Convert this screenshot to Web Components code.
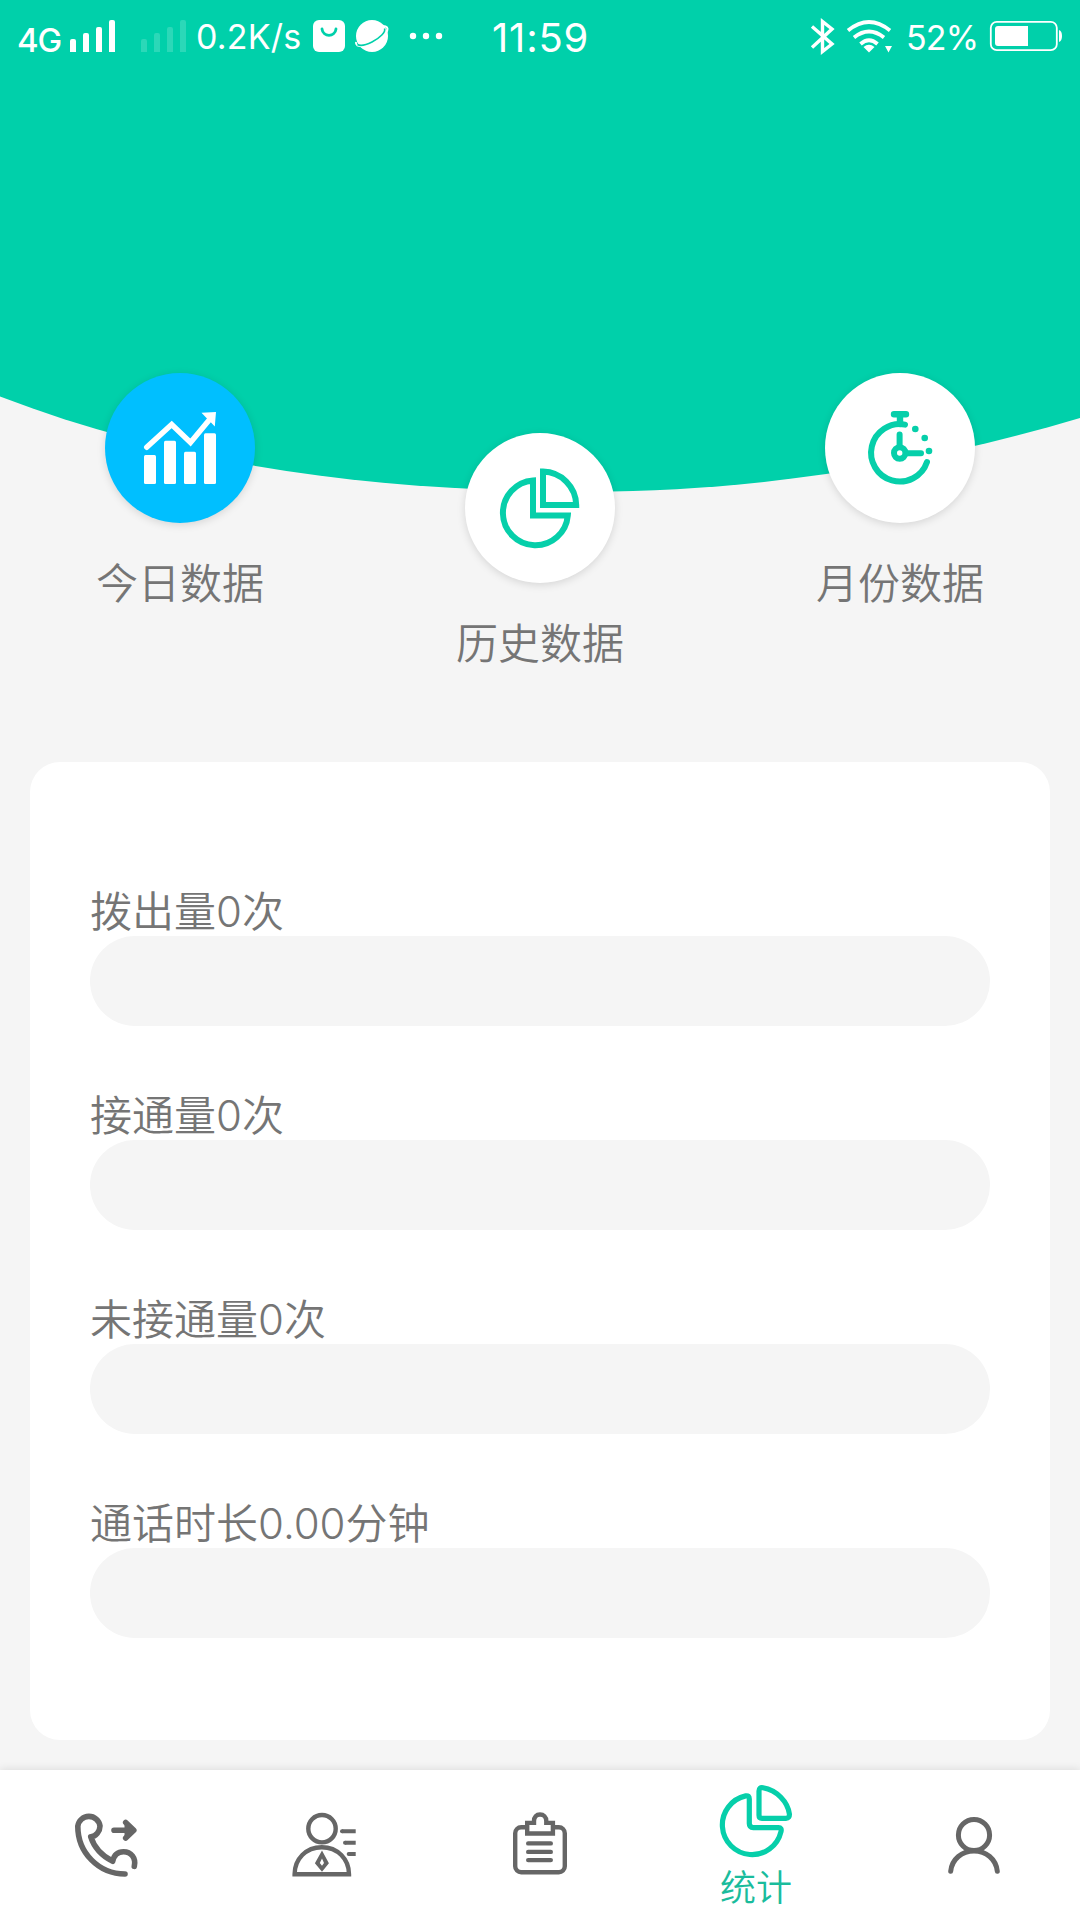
<!DOCTYPE html>
<html lang="zh-CN">
<head>
<meta charset="utf-8">
<title>统计</title>
<style>
html, body {
  margin: 0;
  padding: 0;
}
body {
  width: 1080px;
  height: 1920px;
  overflow: hidden;
  background: #f5f5f5;
  color: #757575;
  font-family: Inter, "Noto Sans CJK SC", sans-serif;
}
</style>
</head>
<body>
<stats-page>
  <status-bar slot="status"></status-bar>
  <round-tab slot="tabs" icon="chart" active>今日数据</round-tab>
  <round-tab slot="tabs" icon="pie" low>历史数据</round-tab>
  <round-tab slot="tabs" icon="timer">月份数据</round-tab>
  <stat-row>拨出量0次</stat-row>
  <stat-row>接通量0次</stat-row>
  <stat-row>未接通量0次</stat-row>
  <stat-row>通话时长0.00分钟</stat-row>
  <nav-item slot="nav" icon="call"></nav-item>
  <nav-item slot="nav" icon="contact"></nav-item>
  <nav-item slot="nav" icon="clipboard"></nav-item>
  <nav-item slot="nav" icon="stats" active>统计</nav-item>
  <nav-item slot="nav" icon="user"></nav-item>
</stats-page>

<script>
// Icons of the round tabs, on a 150x150 canvas
const tabIcons = {
  chart: `
    <g fill="currentColor">
      <rect x="39" y="82" width="12" height="29" rx="1.5"/>
      <rect x="59" y="67.7" width="12" height="43.3" rx="1.5"/>
      <rect x="79" y="78.7" width="12" height="32.3" rx="1.5"/>
      <rect x="99" y="60.3" width="12" height="50.7" rx="1.5"/>
      <path d="M96.5 39.8L111 39L109.8 53.5L106 49.5L101 44.5Z"/>
    </g>
    <path d="M41.7 74.3L66.7 51.5L85.5 69.5L105 46" stroke-width="5.4" stroke-linecap="round"/>`,
  pie: `
    <path d="M78 38.6A34 34 0 0 1 111.2 72H78Z" stroke-width="6"/>
    <path d="M68 47.4A32.5 32.5 0 1 0 102.8 82.5H68Z" stroke-width="6"/>`,
  timer: `
    <g stroke-width="6" stroke-linecap="round">
      <path d="M69 41.3H81M75 42V51" stroke-width="6.4"/>
      <path d="M80 51.6A28.7 28.7 0 1 0 102 89"/>
      <path d="M74.6 61.5V73M82 80.2H96"/>
      <circle cx="74.7" cy="80" r="5.7"/>
    </g>
    <g fill="currentColor" stroke="none">
      <circle cx="90.3" cy="56" r="3.3"/>
      <circle cx="99.7" cy="65" r="3.3"/>
      <circle cx="104" cy="78" r="3.3"/>
    </g>`
};

// Icons of the bottom navigation, on a 72x72 canvas
const navIcons = {
  call: `
    <g stroke-width="5.6" stroke-linecap="round" stroke-linejoin="round">
      <path d="M53 65C27 65 5.8 44 5.8 17.2A11.2 11.2 0 0 1 28 17C28 22 24 27.7 18.7 27.7C22 38 30 47 40.7 52.3C42 46 46 42.7 51.5 42.7C59 42.7 64.3 49 62.3 57.3"/>
      <path d="M42 21.3H60M53.7 13.5L61.8 21.3L53.7 29.1"/>
    </g>
    <path d="M53 16L61 21.3L53 27Z" fill="currentColor"/>`,
  contact: `
    <g stroke-width="4.4">
      <circle cx="34" cy="19.7" r="13.7"/>
      <path d="M6.6 65.3C6.6 50 18 38.2 33.8 38.2S61 50 61 65.3Z"/>
      <path d="M67.7 22.3H54M67.7 33.7H57M67.7 45H60.7" stroke-width="4"/>
    </g>
    <g fill="currentColor">
      <path fill-rule="evenodd" d="M34 41.5L40.9 54.3L34 62.8L26.9 54.3ZM34 49.5L31.8 54L34 56.8L36 54Z"/>
      <circle cx="54" cy="22.3" r="2"/>
      <circle cx="57" cy="33.7" r="2"/>
      <circle cx="60.7" cy="45" r="2"/>
    </g>`,
  clipboard: `
    <g stroke-width="4.4">
      <path d="M22 18.2H17.2A6 6 0 0 0 11.2 24.2V57.2A6 6 0 0 0 17.2 63.2H54.8A6 6 0 0 0 60.8 57.2V24.2A6 6 0 0 0 54.8 18.2H50"/>
      <path d="M23.2 24.5V13.9H30V12C30 8 32.4 5.5 36 5.5S42.3 8 42.3 12V13.9H48.9V24.5Z"/>
      <path d="M24.2 34.4H46.8M24.2 42.9H46.8M24.2 51.1H46.8" stroke-linecap="round"/>
    </g>`,
  stats: `
    <g stroke-width="5.2">
      <path d="M29.3 14V38.6Q29.3 42.6 33.3 42.6H58.5Q62 42.6 61 46.6A29.7 29.7 0 1 1 25.7 10.9Q29.3 10.2 29.3 14Z"/>
      <path d="M39 6Q39 2 43 2.7C57 5 67.8 17 69.4 29Q69.7 33.3 66 33.3H42Q39 33.3 39 30.3Z"/>
    </g>`,
  user: `
    <g stroke-width="5" stroke-linecap="round">
      <circle cx="38" cy="26" r="15.6"/>
      <path d="M14.7 62.2C16 50 26 42 38 42S60 50 61.3 62.2"/>
    </g>`
};

class StatsPage extends HTMLElement {
  constructor() {
    super();
    this.attachShadow({ mode: "open" });
    this.shadowRoot.innerHTML = `
<style>
:host {
  display: flex;
  flex-direction: column;
  height: 1920px;
  position: relative;
}
.curve {
  position: absolute;
  top: 0;
  left: 0;
  z-index: -1;
}
.tabs {
  display: grid;
  grid-template-columns: repeat(3, 1fr);
  height: 389px;
  padding-top: 301px;
  align-items: start;
}
.card {
  box-sizing: border-box;
  height: 978px;
  margin: 0 30px;
  padding: 120px 60px 0;
  border-radius: 30px;
  background: white;
  display: flex;
  flex-direction: column;
  gap: 60px;
}
nav {
  display: grid;
  grid-template-columns: repeat(5, 1fr);
  height: 150px;
  margin-top: auto;
  background: white;
  box-shadow: 0 -1px 8px rgba(0, 0, 0, .1);
}
</style>
<svg class="curve" width="1080" height="500" viewBox="0 0 1080 500">
  <path d="M0 0H1080V418C920 466 750 491.5 590 491.5C400 491.5 200 473.2 0 396.5Z" fill="#00d0aa"/>
</svg>
<slot name="status"></slot>
<div class="tabs"><slot name="tabs"></slot></div>
<div class="card"><slot></slot></div>
<nav><slot name="nav"></slot></nav>`;
  }
}

class StatusBar extends HTMLElement {
  constructor() {
    super();
    this.attachShadow({ mode: "open" });
    this.shadowRoot.innerHTML = `
<style>
:host {
  box-sizing: border-box;
  display: flex;
  align-items: center;
  height: 72px;
  padding-left: 17px;
  color: white;
  font-size: 34px;
  line-height: 72px;
}
span {
  display: block;
  flex: none;
  white-space: nowrap;
}
svg {
  display: block;
  flex: none;
  height: 72px;
}
.net {
  width: 53px;
  padding-top: 7px;
  font-size: 33px;
  font-weight: 500;
  letter-spacing: -1.2px;
}
.speed {
  width: 117px;
  padding-top: 2px;
  letter-spacing: .2px;
}
.time {
  width: 318px;
  padding-top: 3px;
  font-size: 40px;
  letter-spacing: .8px;
}
.power {
  width: 83px;
  padding-top: 3px;
  letter-spacing: -.8px;
}
</style>
<span class="net">4G</span>
<svg width="126" viewBox="70 0 126 72" fill="white">
  <path id="bars" d="M70 41a2 2 0 0 1 2-2h2a2 2 0 0 1 2 2V52H70ZM83 35a2 2 0 0 1 2-2h2a2 2 0 0 1 2 2V52H83ZM96 29a2 2 0 0 1 2-2h2a2 2 0 0 1 2 2V52H96ZM109 22a2 2 0 0 1 2-2h2a2 2 0 0 1 2 2V52H109Z"/>
  <use href="#bars" x="71" opacity=".17"/>
</svg>
<span class="speed">0.2K/s</span>
<svg width="179" viewBox="313 0 179 72" fill="white">
  <rect x="313" y="20" width="32" height="32" rx="6"/>
  <path d="M322 29C323 37.500 335 37.500 336 29" fill="none" stroke="#00d0aa" stroke-width="2.800" stroke-linecap="round"/>
  <circle cx="372" cy="36" r="16"/>
  <path d="M383 26C391 26 388 34 377 40.500C366 46.500 355 48.500 356 42" fill="none" stroke="white" stroke-width="2"/>
  <path d="M384.500 28.500C386 32 380 38 372 42C366 45 360 46 357.500 44.500" fill="none" stroke="#00d0aa" stroke-width="1.600"/>
  <circle cx="413" cy="36" r="3.200"/>
  <circle cx="426" cy="36" r="3.200"/>
  <circle cx="439" cy="36" r="3.200"/>
</svg>
<span class="time">11:59</span>
<svg width="96" viewBox="810 0 96 72" fill="none" stroke="white">
  <path d="M812 26.500L832 44L822.500 51.500V21.500L832 29L812 47.500" stroke-width="3.400"/>
  <path d="M848 30.500Q869 13.500 890 30.500M854 37.500Q869 25.500 884 37.500M860.500 44Q869 36.500 877.500 44" stroke-width="3.800"/>
  <path d="M863.500 47Q869 42.500 874.500 47L869 52.500ZM885 46H892L888.500 52.500Z" fill="white" stroke="none"/>
</svg>
<span class="power">52%</span>
<svg width="74" viewBox="989 0 74 72" fill="white">
  <rect x="990.800" y="21.800" width="66" height="28.400" rx="6" fill="none" stroke="white" stroke-width="1.800"/>
  <path d="M998 26H1028V46H998A3 3 0 0 1 995 43V29A3 3 0 0 1 998 26ZM1059 30Q1062 31 1062 36T1059 42Z"/>
</svg>`;
  }
}

class RoundTab extends HTMLElement {
  constructor() {
    super();
    this.attachShadow({ mode: "open" });
  }

  connectedCallback() {
    this.shadowRoot.innerHTML = `
<style>
:host {
  display: flex;
  flex-direction: column;
  align-items: center;
  font-size: 42px;
  line-height: 60px;
  font-weight: 350;
}
:host([low]) {
  margin-top: 60px;
}
.circle {
  width: 150px;
  height: 150px;
  margin-bottom: 31px;
  border-radius: 50%;
  background: white;
  color: #06cfaa;
  box-shadow: 0 2px 9px rgba(0, 0, 0, .13);
}
:host([active]) .circle {
  background: #00bfff;
  color: white;
}
svg {
  display: block;
}
</style>
<div class="circle">
  <svg width="150" height="150" viewBox="0 0 150 150" fill="none" stroke="currentColor">${tabIcons[this.getAttribute("icon")]}</svg>
</div>
<slot></slot>`;
    // bars and arrow head of the chart are filled only
    this.shadowRoot.querySelectorAll("g[fill]").forEach(g => g.setAttribute("stroke", "none"));
  }
}

class StatRow extends HTMLElement {
  constructor() {
    super();
    this.attachShadow({ mode: "open" });
    this.shadowRoot.innerHTML = `
<style>
:host {
  display: block;
  font-size: 42px;
  line-height: 60px;
  font-weight: 350;
  white-space: nowrap;
}
.label {
  height: 54px;
}
.track {
  height: 90px;
  border-radius: 45px;
  background: #f5f5f5;
}
</style>
<div class="label"><slot></slot></div>
<div class="track"></div>`;
  }
}

class NavItem extends HTMLElement {
  constructor() {
    super();
    this.attachShadow({ mode: "open" });
  }

  connectedCallback() {
    this.shadowRoot.innerHTML = `
<style>
:host {
  display: flex;
  flex-direction: column;
  align-items: center;
  justify-content: center;
  color: #666;
  font-size: 36px;
  line-height: 50px;
}
:host([active]) {
  justify-content: flex-start;
  padding-top: 15px;
  color: #06cfaa;
}
svg {
  display: block;
  flex: none;
  overflow: visible;
}
.label {
  margin-top: 6px;
  color: #1abc9c;
  font-weight: 350;
}
:host(:not([active])) .label {
  display: none;
}
</style>
<svg width="72" height="72" viewBox="0 0 72 72" fill="none" stroke="currentColor">${navIcons[this.getAttribute("icon")]}</svg>
<div class="label"><slot></slot></div>`;
    this.shadowRoot.querySelectorAll("g[fill]").forEach(g => g.setAttribute("stroke", "none"));
  }
}

window.customElements.define("stats-page", StatsPage);
window.customElements.define("status-bar", StatusBar);
window.customElements.define("round-tab", RoundTab);
window.customElements.define("stat-row", StatRow);
window.customElements.define("nav-item", NavItem);
</script>
</body>
</html>
